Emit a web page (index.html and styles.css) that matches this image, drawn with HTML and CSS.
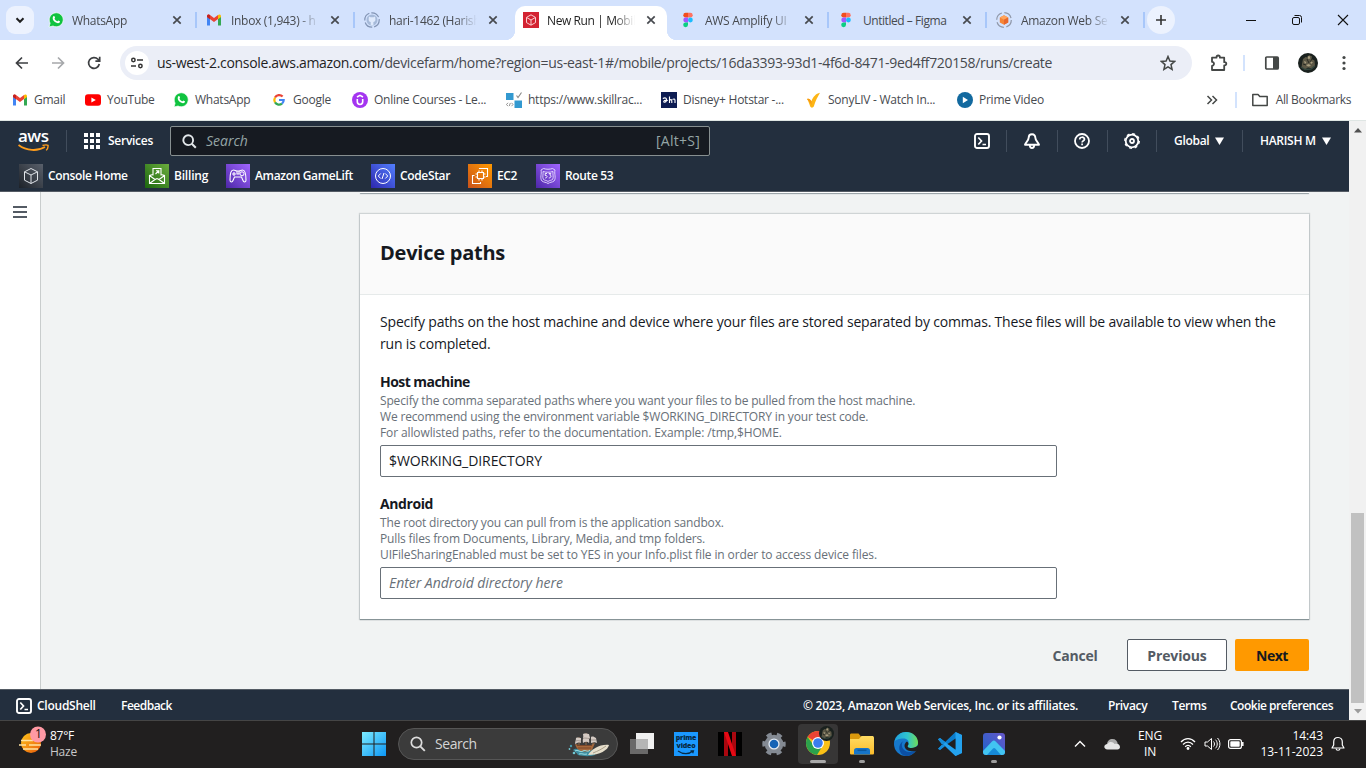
FILE: index.html
```html
<!DOCTYPE html>
<html lang="en">
<head>
<meta charset="utf-8">
<title>New Run | Mobile</title>
<link rel="stylesheet" href="styles.css">
</head>
<body>
<svg class="defs" width="0" height="0">
  <defs>
    <linearGradient id="gHome" x1="0" y1="1" x2="1" y2="0"><stop offset="0" stop-color="#1d2229"/><stop offset="1" stop-color="#59606b"/></linearGradient>
    <linearGradient id="gBill" x1="0" y1="1" x2="1" y2="0"><stop offset="0" stop-color="#1b660f"/><stop offset="1" stop-color="#6cae3e"/></linearGradient>
    <linearGradient id="gPurple" x1="0" y1="1" x2="1" y2="0"><stop offset="0" stop-color="#4d27a8"/><stop offset="1" stop-color="#a166ff"/></linearGradient>
    <linearGradient id="gBlue" x1="0" y1="1" x2="1" y2="0"><stop offset="0" stop-color="#2e27ad"/><stop offset="1" stop-color="#527fff"/></linearGradient>
    <linearGradient id="gOrange" x1="0" y1="1" x2="1" y2="0"><stop offset="0" stop-color="#c8511b"/><stop offset="1" stop-color="#ff9900"/></linearGradient>
    <linearGradient id="gWin" x1="0" y1="0" x2="1" y2="1"><stop offset="0" stop-color="#7cecff"/><stop offset="1" stop-color="#0c96f5"/></linearGradient>
    <linearGradient id="gSun" x1="0" y1="0" x2="1" y2="1"><stop offset="0" stop-color="#ffc61a"/><stop offset="1" stop-color="#e8590c"/></linearGradient>
    <linearGradient id="gEdge" x1="0" y1="0" x2="1" y2="0"><stop offset="0" stop-color="#1fa0dc"/><stop offset=".55" stop-color="#2fc3cf"/><stop offset="1" stop-color="#6fdc58"/></linearGradient>
    <linearGradient id="gPhoto" x1="0" y1="1" x2="1" y2="0"><stop offset="0" stop-color="#1d63c9"/><stop offset="1" stop-color="#6656c9"/></linearGradient>
    <linearGradient id="gFolder" x1="0" y1="0" x2="0" y2="1"><stop offset="0" stop-color="#ffdc63"/><stop offset="1" stop-color="#fcbc2b"/></linearGradient>
    <symbol id="x" viewBox="0 0 16 16"><path d="M4.300 4.300l7.400 7.400M11.700 4.300l-7.400 7.400" stroke="currentColor" stroke-width="1.700" fill="none"/></symbol>
    <symbol id="whatsapp" viewBox="0 0 16 16"><path d="M1 15l1.100-3.800A7 7 0 1 1 5 14z" fill="#10c340" stroke="#fff" stroke-width=".7"/><path d="M5.300 4.300c.8-.7 1.200-.2 1.700 1.200.2.6-.6 1-.5 1.300.6 1.200 1.400 2 2.700 2.500.5 0 .8-1 1.200-.9 1.600.6 1.900 1 1.400 1.900-1 1.600-3 1.100-4.900-.2C4.900 8.500 3.900 6.200 5.300 4.300z" fill="#fff"/></symbol>
    <symbol id="gmail" viewBox="0 0 16 16"><path d="M1 4.500v9h3V6.800z" fill="#4285f4"/><path d="M15 4.500v9h-3V6.800z" fill="#34a853"/><path d="M1 4.200C1 2.500 2.800 2 4 3l4 3 4-3v4L8 10 1 5z" fill="#ea4335"/><path d="M12 3c1.200-1 3-.5 3 1.200V5l-3 2.300z" fill="#fbbc04"/><path d="M1 4.200C1 2.500 2.800 2 4 3v4.200L1 5z" fill="#c5221f"/></symbol>
    <symbol id="figma" viewBox="0 0 16 16"><path d="M8 .8H5.700a2.400 2.400 0 0 0 0 4.800H8z" fill="#f24e1e"/><path d="M8 .8h2.300a2.400 2.400 0 0 1 0 4.800H8z" fill="#ff7262"/><path d="M8 5.600H5.700a2.400 2.400 0 0 0 0 4.800H8z" fill="#a259ff"/><circle cx="10.400" cy="8" r="2.400" fill="#1abcfe"/><path d="M8 10.400H5.700A2.400 2.400 0 1 0 8 12.800z" fill="#0acf83"/></symbol>
    <symbol id="shell" viewBox="0 0 16 16"><rect x="1" y="1" width="14" height="14" rx="2" fill="none" stroke="#fff" stroke-width="1.900"/><path d="M4.300 4.500L7.500 8l-3.200 3.500M8.500 11.500H12" fill="none" stroke="#fff" stroke-width="1.700"/></symbol>
    <symbol id="avatar" viewBox="0 0 20 20"><circle cx="10" cy="10" r="10" fill="#1a211e"/><path d="M5 6l2.500-2 2 .5L11 2l3 1.500-.5 2.500 3 1.500.5 5-3 3-4-1-3 2-3.500-2L4 11z" fill="#5c5846"/><path d="M9.500 3.500l2-.5.800 2.500-2 .5zM6 8l2.500 1L7 11zM12 8l3 1.500-2 1.500zM8 12l3-1 2 2-3 .5z" fill="#a99e80"/><path d="M9 6l2 4M14 6l-2 3M5 11l3 1" stroke="#22251f" stroke-width=".9"/><path d="M3 14l4 2.500 6-.5 4-3" stroke="#34473f" stroke-width="1.300" fill="none"/></symbol>
  </defs>
</svg>

<header class="tabstrip">
  <div class="menu-slot"><span class="tab-menu"><svg width="12" height="12"><path d="M2.500 4.300L6 7.800l3.500-3.500" fill="none" stroke="#1f1f1f" stroke-width="2"/></svg></span></div>
  <div class="tab sep"><svg class="fav"><use href="#whatsapp"/></svg><span class="tt">WhatsApp</span><svg class="close"><use href="#x"/></svg></div>
  <div class="tab sep"><svg class="fav"><use href="#gmail"/></svg><span class="tt">Inbox (1,943) - h</span><svg class="close"><use href="#x"/></svg></div>
  <div class="tab"><svg class="fav" viewBox="0 0 16 16"><circle cx="8" cy="8" r="7.200" fill="none" stroke="#8193b3" stroke-width="1.200" stroke-dasharray="9 2"/><circle cx="8" cy="8" r="5.500" fill="#a6bad9"/><path d="M4.900 4.500l1.700.7h2.800l1.700-.7.3 2.500c.3 2-1 2.900-2 3.100V13.300H6.700v-3.200C5.500 9.900 4.400 9 4.700 7z" fill="#dfeafc"/></svg><span class="tt">hari-1462 (Harish</span><svg class="close"><use href="#x"/></svg></div>
  <div class="tab active"><svg class="fav" viewBox="0 0 16 16"><rect width="16" height="16" fill="#d32332"/><path d="M8 2.800l4.500 2.600v5.200L8 13.200l-4.500-2.600V5.400zM3.800 5.600L8 8l4.200-2.400M8 8v5" fill="none" stroke="#ffdfe0" stroke-width=".9"/></svg><span class="tt">New Run | Mobil</span><svg class="close"><use href="#x"/></svg></div>
  <div class="tab sep"><svg class="fav"><use href="#figma"/></svg><span class="tt">AWS Amplify UI</span><svg class="close"><use href="#x"/></svg></div>
  <div class="tab sep"><svg class="fav"><use href="#figma"/></svg><span class="tt full">Untitled – Figma</span><svg class="close"><use href="#x"/></svg></div>
  <div class="tab sep"><svg class="fav" viewBox="0 0 16 16"><circle cx="8" cy="8" r="7.300" fill="none" stroke="#8f97a8" stroke-width="1.200" stroke-dasharray="9 2.500"/><path d="M8 3.200l4.200 2.300v5L8 12.800l-4.200-2.300v-5z" fill="#f58536"/><path d="M8 3.200l4.200 2.300L8 7.800 3.800 5.500z" fill="#ffa45c"/><path d="M8 7.800l4.200-2.300v5L8 12.800z" fill="#e8672c"/></svg><span class="tt">Amazon Web Se</span><svg class="close"><use href="#x"/></svg></div>
  <span class="newtab"><svg width="12" height="12"><path d="M6 1v10M1 6h10" stroke="#333" stroke-width="1.600"/></svg></span>
  <div class="winctl">
    <svg width="12" height="12"><path d="M1 6.500h10" stroke="#111"/></svg>
    <svg width="12" height="12"><rect x="1.500" y="3.500" width="7" height="7" rx="1.500" fill="none" stroke="#111"/><path d="M3.500 1.500h5a2 2 0 0 1 2 2v5" fill="none" stroke="#111"/></svg>
    <svg width="12" height="12"><path d="M1 1l10 10M11 1L1 11" stroke="#111" stroke-width="1.100"/></svg>
  </div>
</header>

<div class="toolbar">
  <div class="nav">
    <svg width="16" height="16"><path d="M14 8H2.500M8 2.500L2.500 8 8 13.500" fill="none" stroke="#3d3f42" stroke-width="1.700"/></svg>
    <svg width="16" height="16"><path d="M2 8h11.500M8 2.500L13.500 8 8 13.500" fill="none" stroke="#a6a8ab" stroke-width="1.700"/></svg>
    <svg width="16" height="16"><path d="M13.300 9A5.400 5.400 0 1 1 12 4.300l1.300 1.400M13.700 1.800v4.300H9.400" fill="none" stroke="#3d3f42" stroke-width="1.700"/></svg>
  </div>
  <div class="omnibox">
    <span class="site"><svg width="14" height="12"><circle cx="3.400" cy="3" r="1.700" fill="none" stroke="#333" stroke-width="1.500"/><path d="M7 3h6M1 9h5" stroke="#333" stroke-width="1.700"/><circle cx="10.400" cy="9" r="1.700" fill="none" stroke="#333" stroke-width="1.500"/></svg></span>
    <span class="url">us-west-2.console.aws.amazon.com<i>/devicefarm/home?region=us-east-1#/mobile/projects/16da3393-93d1-4f6d-8471-9ed4ff720158/runs/create</i></span>
    <svg class="star" width="16" height="16"><path d="M8 1.500l1.900 4.500 4.700.4-3.600 3.200 1.100 4.800L8 11.900l-4.100 2.500L5 9.600 1.400 6.400 6.100 6z" fill="none" stroke="#444746" stroke-width="1.500"/></svg>
  </div>
  <svg class="ext" width="18" height="18"><path d="M2 3.700h4.500v-.5a1.700 1.700 0 0 1 3.400 0v.5h4.300v4.500h.5a1.600 1.600 0 0 1 0 3.200h-.5V16H2v-4.200a2 2 0 0 0 0-4z" fill="none" stroke="#444746" stroke-width="1.800" stroke-linejoin="round"/></svg>
  <span class="bar"></span>
  <svg class="panel" width="16" height="16"><rect x="1.800" y="2" width="12.400" height="12" rx="1" fill="none" stroke="#444746" stroke-width="1.700"/><path d="M9 2h5v12H9z" fill="#444746"/></svg>
  <svg class="avatar" width="20" height="20"><use href="#avatar"/></svg>
  <svg class="dots" width="4" height="16"><g fill="#444746"><circle cx="2" cy="2.500" r="1.600"/><circle cx="2" cy="8" r="1.600"/><circle cx="2" cy="13.500" r="1.600"/></g></svg>
</div>

<nav class="bookmarks">
  <a class="w72"><svg><use href="#gmail"/></svg>Gmail</a>
  <a class="w89"><svg viewBox="0 0 16 16"><rect x="0" y="2.300" width="16" height="11.400" rx="3" fill="#f00"/><path d="M6.400 5.500L10.800 8l-4.400 2.500z" fill="#fff"/></svg>YouTube</a>
  <a class="w98"><svg><use href="#whatsapp"/></svg>WhatsApp</a>
  <a class="w81"><svg viewBox="0 0 16 16"><g fill="none" stroke-width="2.200"><path d="M11.600 4.500A4.700 4.700 0 0 0 4 5.600" stroke="#ea4335"/><path d="M4 5.600a4.700 4.700 0 0 0 0 4.800" stroke="#fbbc05"/><path d="M4 10.400a4.700 4.700 0 0 0 7 1.200" stroke="#34a853"/><path d="M11 11.600A4.600 4.600 0 0 0 12.700 8H8" stroke="#4285f4"/></g></svg>Google</a>
  <a class="w153"><svg viewBox="0 0 16 16"><circle cx="8" cy="8" r="8" fill="#a435f0"/><path d="M5.300 7v2.800c0 3.500 5.400 3.500 5.400 0V7M5 5l3-1.600L11 5" fill="none" stroke="#fff" stroke-width="1.600"/></svg>Online Courses - Le...</a>
  <a class="w156"><svg viewBox="0 0 16 16"><path d="M0 1h7.500v7H0zM8.500 8.500H16V16H8.500z" fill="#3399d0"/><path d="M10.500 3.500l1.500 2L15.500.500" stroke="#888" fill="none" stroke-width="1.100"/><path d="M2 10.800L.500 12.500 2 14.200M5.500 10.800L7 12.500l-1.500 1.700M4.300 11l-1 3" stroke="#777" stroke-width=".8" fill="none"/></svg>https://www.skillrac...</a>
  <a class="w145"><svg viewBox="0 0 16 16"><rect width="16" height="16" fill="#0d1c52"/><path d="M1.800 6.500c3-1.500 4.200 0 3.700 2S2.200 10.700 2.800 9.300s2-1.200 4-.8M8.500 4.500V11M8.500 8.500c1.300-1.500 2.300-1 2.300.5v2M11.500 7.500c1.500-1 2.500-.5 2.500 1V11" fill="none" stroke="#fff" stroke-width="1.100"/></svg>Disney+ Hotstar -...</a>
  <a class="w151"><svg viewBox="0 0 16 16"><path d="M1 7c2-.8 3.200 0 4.300 2.300C7 5 10 1.500 14 .8 11.500 5 9.500 9 7.800 14.500c-.8 1.500-2.800 1.600-3.600 0C3.200 11.500 2.500 9 1 7z" fill="#fdb515"/><path d="M1 7c2-.8 3.200 0 4.300 2.300L5.800 13z" fill="#f79a13"/></svg>SonyLIV - Watch In...</a>
  <a class="grow"><svg viewBox="0 0 16 16"><circle cx="8" cy="8" r="8" fill="#12699f"/><path d="M5.800 4.800L11 8l-5.200 3.200z" fill="#fff"/></svg>Prime Video</a>
  <svg class="more" width="12" height="12"><path d="M1.500 2L5.500 6l-4 4M6.500 2l4 4-4 4" fill="none" stroke="#444746" stroke-width="1.500"/></svg>
  <span class="bar"></span>
  <a class="all"><svg viewBox="0 0 16 16"><path d="M.8 13.500v-11H6l1.800 2h7.400v9z" fill="none" stroke="#444746" stroke-width="1.500" stroke-linejoin="round"/></svg>All Bookmarks</a>
</nav>

<div class="viewport">
<div class="page">
  <div class="aws">
    <div class="aws-row">
      <div class="logo"><span>aws</span><svg width="32" height="9"><path d="M.5 1c8 6 19 6.500 26.500 2" fill="none" stroke="#ff9d1c" stroke-width="1.800"/><path d="M24.500 1.500c2.500-.8 4.500-.8 5.500-.2.300 1.700-.3 3.400-1.800 5.100" fill="none" stroke="#ff9d1c" stroke-width="1.400"/></svg></div>
      <span class="vr"></span>
      <svg class="grid" width="16" height="16" fill="#fff"><path d="M0 0h4v4H0zM6 0h4v4H6zM12 0h4v4h-4zM0 6h4v4H0zM6 6h4v4H6zM12 6h4v4h-4zM0 12h4v4H0zM6 12h4v4H6zM12 12h4v4h-4z"/></svg>
      <b class="services">Services</b>
      <div class="search"><svg width="15" height="15"><circle cx="6.200" cy="6.200" r="4.900" fill="none" stroke="#e3e7ea" stroke-width="1.900"/><path d="M9.800 9.800l4 4" stroke="#e3e7ea" stroke-width="2"/></svg><i>Search</i><span>[Alt+S]</span></div>
      <div class="tools">
        <span class="cell c1"><svg width="16" height="16"><use href="#shell"/></svg></span>
        <span class="cell c2"><svg width="16" height="16"><path d="M8 1.300c-2.400 0-3.300 1.700-3.300 3.300C4.700 8 1.500 9.500 1 11.700h14c-.5-2.200-3.700-3.700-3.700-7.100C11.300 3 10.400 1.300 8 1.300z" fill="none" stroke="#fff" stroke-width="1.900" stroke-linejoin="round"/><path d="M5.800 12c0 4 4.400 4 4.400 0" fill="none" stroke="#fff" stroke-width="1.800"/></svg></span>
        <span class="cell c3"><svg width="16" height="16"><circle cx="8" cy="8" r="7" fill="none" stroke="#fff" stroke-width="1.800"/><path d="M5.700 6.500c0-3 4.800-3 4.800-.2 0 1.500-2.400 1.400-2.400 3.200M8.100 10.600v1.700" fill="none" stroke="#fff" stroke-width="1.700"/></svg></span>
        <span class="cell c4"><svg width="16" height="16"><circle cx="8" cy="8" r="6.300" fill="none" stroke="#fff" stroke-width="1.800"/><circle cx="8" cy="8" r="7.300" fill="none" stroke="#fff" stroke-width="1.300" stroke-dasharray="2.900 2.830"/><circle cx="8" cy="8" r="2" fill="none" stroke="#fff" stroke-width="1.800"/></svg></span>
        <span class="cell c5">Global<svg width="9" height="8"><path d="M0 .5h9L4.500 8z" fill="#fff"/></svg></span>
        <span class="cell c6">HARISH M<svg width="9" height="8"><path d="M0 .5h9L4.500 8z" fill="#fff"/></svg></span>
      </div>
    </div>
    <div class="favs">
      <b class="f126"><svg viewBox="0 0 24 24"><rect width="24" height="24" fill="url(#gHome)"/><path d="M12 4.500l6.500 3.300v8.400L12 19.500l-6.500-3.300V7.800zM5.500 7.800L12 11l6.500-3.200M12 11v8.500" fill="none" stroke="#dfe3e8"/></svg>Console Home</b>
      <b class="f81"><svg viewBox="0 0 24 24"><rect width="24" height="24" fill="url(#gBill)"/><path d="M8 11.500v-7h8v7M8 10.500l-3.500 1v8h15v-8l-3.500-1M4.500 11.500l5.500 4 2-1 2 1 5.500-4M10.500 10l3-3M11 6.800h2.800v2.800M4.500 19.500l5.500-4M19.500 19.500l-5.500-4" fill="none" stroke="#fff" stroke-width="1.100"/></svg>Billing</b>
      <b class="f145"><svg viewBox="0 0 24 24"><rect width="24" height="24" fill="url(#gPurple)"/><path d="M7.500 6C5 6 4 9 4 16c0 2.500 2.300 2.500 3 .5l1.500-3.500h7l1.500 3.500c.7 2 3 2 3-.5 0-7-1-10-3.500-10-1.500 0-2 1-3.500 1h-2C9.500 7 9 6 7.500 6zM8 8v4M6 10h4M11 7v3h2V7" fill="none" stroke="#fff" stroke-width="1.100"/><circle cx="16" cy="9.800" r="2" fill="none" stroke="#fff"/></svg>Amazon GameLift</b>
      <b class="f97"><svg viewBox="0 0 24 24"><rect width="24" height="24" fill="url(#gBlue)"/><circle cx="12" cy="12" r="7.500" fill="none" stroke="#fff"/><path d="M9.700 9.500L7.300 12l2.400 2.500M14.300 9.500l2.400 2.500-2.400 2.500M13 9l-2 6" fill="none" stroke="#fff"/></svg>CodeStar</b>
      <b class="f68"><svg viewBox="0 0 24 24"><rect width="24" height="24" fill="url(#gOrange)"/><path d="M9.500 8.500h6v6h-6zM11 8.500v-2M14 8.500v-2M11 16.500v-2M14 16.500v-2M9.500 10H7.500M9.500 13H7.500M17.500 10h-2M17.500 13h-2M11.500 5V4.500h8v8h-1.500M6.500 11.500h-2v8h8V18" fill="none" stroke="#fff" stroke-width="1.100"/></svg>EC2</b>
      <b><svg viewBox="0 0 24 24"><rect width="24" height="24" fill="url(#gPurple)"/><path d="M5 6l2.500-1.500c3 1 6 1 9 0L19 6c-1 4 1.500 8-1 11-2 1.500-4 1-6 2.500-2-1.500-4-1-6-2.500-2.500-3 0-7-1-11zM7 7.500c3.500 1 6.500 1 10 0-.5 3 1 6-.5 8-1.500 1-3 .8-4.500 2-1.500-1.200-3-1-4.500-2-1.500-2 0-5-.5-8z" fill="none" stroke="#e9ddff" stroke-width=".9"/><path d="M11 9.500H9.200v2c2.500-.5 2.500 2.500 0 2.500M12.700 9.500h2.100l-1 1.500c2 .3 1.500 3-1 3" fill="none" stroke="#fff" stroke-width=".9"/></svg>Route 53</b>
    </div>
  </div>

  <div class="main">
    <aside class="rail"><svg width="14" height="12"><path d="M0 1h14M0 6h14M0 11h14" stroke="#545b64" stroke-width="2"/></svg></aside>
    <div class="content">
      <div class="prev-card"></div>
      <section class="card">
        <h2>Device paths</h2>
        <div class="card-body">
          <p class="intro">Specify paths on the host machine and device where your files are stored separated by commas. These files will be available to view when the<br>run is completed.</p>
          <label>Host machine</label>
          <p class="hint">Specify the comma separated paths where you want your files to be pulled from the host machine.<br>We recommend using the environment variable $WORKING_DIRECTORY in your test code.<br><span class="wide">For allowlisted paths, refer to the documentation. Example: /tmp,$HOME.</span></p>
          <div class="input">$WORKING_DIRECTORY</div>
          <label class="android">Android</label>
          <p class="hint">The root directory you can pull from is the application sandbox.<br>Pulls files from Documents, Library, Media, and tmp folders.<br><span class="wide">UIFileSharingEnabled must be set to YES in your Info.plist file in order to access device files.</span></p>
          <div class="input ph">Enter Android directory here</div>
        </div>
      </section>
      <div class="actions"><span class="cancel">Cancel</span><span class="previous">Previous</span><span class="next">Next</span></div>
    </div>
  </div>

  <footer class="foot">
    <svg width="16" height="16"><use href="#shell"/></svg><span class="cs">CloudShell</span><span class="fb">Feedback</span>
    <span class="copy">© 2023, Amazon Web Services, Inc. or its affiliates.</span><span class="pr">Privacy</span><span class="te">Terms</span><span class="ck">Cookie preferences</span>
  </footer>
</div>
<div class="scroll"><svg width="8" height="5"><path d="M0 4.500L4 0l4 4.500z" fill="#505050"/></svg><span class="thumb"></span><svg width="8" height="5"><path d="M0 0h8L4 4.500z" fill="#9b9b9b"/></svg></div>
</div>

<div class="taskbar">
  <div class="weather"><svg width="27" height="30"><circle cx="12" cy="17" r="10" fill="url(#gSun)"/><path d="M2 14.500h12M17 14.500h4M0 19h7M10 19h12M4 23h15" stroke="#ffe2a0" stroke-width="1.500"/><circle cx="19" cy="8.500" r="8" fill="#ff99a4"/></svg><em>1</em><div><span>87°F</span><span class="haze">Haze</span></div></div>
  <svg class="start" width="24" height="24"><path d="M0 0h11.500v11.500H0zM12.500 0H24v11.500H12.500zM0 12.500h11.500V24H0zM12.500 12.500H24V24H12.500z" fill="url(#gWin)"/></svg>
  <div class="tsearch"><svg width="16" height="16"><circle cx="6.500" cy="6.500" r="5.200" fill="none" stroke="#ddd" stroke-width="1.700"/><path d="M10.300 10.300l4.500 4.500" stroke="#ddd" stroke-width="1.900"/></svg><span>Search</span>
    <svg class="ship" width="42" height="26"><path d="M5 19c3-3 5 0 8-1 6 2 12 0 16 0l-2 6c-6 2-13 1-17 0-1-2-3-3-5-5z" fill="#3f8ea1"/><path d="M7 13l4 1h12l4-2-3 7c-4 2-9 2-13 0-2-1-3-3-4-6z" fill="#a5683c"/><path d="M9 14.500h15M10 17h13" stroke="#7a4628"/><path d="M18 2v12M11 6v8M25 6v8" stroke="#8f6b4b"/><path d="M15 3c3-1 5 0 6 0l1 4c-2 1 0 3-1 5-2-2-4-1-6 0-1-3 1-6 0-9zM8 7c2-1 3 0 5 0v5c-2-1-4 0-6 1 0-2 1-4 1-6zM23 6c2-1 3 0 5 1l1 5c-2-1-3-1-6 0z" fill="#d4cac3"/><path d="M15 7.500c2-1 4 0 6 0M8 10c2-1 3 0 5 0M23 9h5" stroke="#a39890" fill="none"/><path d="M20 24c4-6 12-11 21-10-1 5-9 10-21 10z" fill="#e6decb"/><path d="M25 22c5-2 9-4 13-7" stroke="#a99f89" fill="none"/><circle cx="3" cy="15" r="1.200" fill="#489bad"/><circle cx="1.500" cy="18" r=".9" fill="#70c5d0"/><circle cx="6" cy="22" r="1.300" fill="#70c5d0"/><path d="M7 20c3-2 5 2 8 0s4 2 7-1M11 23c3-1 5 1 8 0" stroke="#9ee0e5" fill="none"/></svg></div>
  <div class="apps">
    <span><svg width="24" height="24"><path d="M6 1h18v16H6z" fill="#f0f0f0"/><path d="M0 7h18v15H0z" fill="#777" opacity=".85"/><path d="M6 7h12v10H6z" fill="#b5b5b5"/></svg></span>
    <span class="pv"><b>prime</b><b>video</b><svg width="18" height="5"><path d="M1 1c5 3.500 11 3.500 15 0M13.500 .8h3l-.8 2.500" fill="none" stroke="#072a45" stroke-width="1.200"/></svg></span>
    <span><svg width="24" height="24"><rect width="24" height="24" fill="#000"/><path d="M6 0h4v24H6zM14 0h4v24h-4z" fill="#a9070f"/><path d="M6 0h4l8 24h-4z" fill="#e50914"/></svg></span>
    <span><svg width="24" height="24"><circle cx="12" cy="12" r="9.300" fill="#848a93"/><circle cx="12" cy="12" r="9.900" fill="none" stroke="#848a93" stroke-width="3.600" stroke-dasharray="5.180 5.180" stroke-dashoffset="2.590"/><circle cx="12" cy="12" r="5.600" fill="#e4eaf2"/><circle cx="12" cy="12" r="4.300" fill="#1663b5"/></svg></span>
    <span class="run on"><svg width="30" height="30"><circle cx="14" cy="17" r="12" fill="#fbc116"/><path d="M14 17L3.600 11A12 12 0 0 1 24.400 11z" fill="#ea4335"/><path d="M14 17h-6L3.600 11A12 12 0 0 0 13 29l5.500-9z" fill="#2ba24c"/><path d="M24.400 11H14v6z" fill="#ea4335"/><circle cx="14" cy="17" r="6" fill="#fff"/><circle cx="14" cy="17" r="4.800" fill="#3b7ded"/><svg x="15" y="0" width="15" height="15"><use href="#avatar"/></svg></svg></span>
    <span class="run"><svg width="24" height="24"><path d="M0 3c0-1 .5-1.500 1.500-1.500h7l2.500 3v5H0z" fill="#d9980d"/><path d="M0 7h9l2.500-3H22c1.300 0 2 .5 2 2v15c0 1-.5 1.500-1.500 1.500h-21C.5 22.500 0 22 0 21z" fill="url(#gFolder)"/><path d="M4 22.500v-4c0-1.500 1-2.500 2.500-2.500h11c1.500 0 2.500 1 2.500 2.500v4z" fill="#1675c9"/><path d="M7.500 18.300h9" stroke="#0b589e" stroke-width="1.500"/></svg></span>
    <span><svg width="24" height="24"><circle cx="12" cy="12" r="12" fill="#1678cc"/><path d="M.3 10C2 3 7 0 12 0c7 0 12 5 12 10.500 0 4-3.500 5.500-6.500 5.500-4 0-4.500-1.500-3.300-3C16 9 13 6.500 9.500 6.500 5 6.500 1.500 8 .3 10z" fill="url(#gEdge)"/><path d="M9.500 9C6 12 8 20 16 20c3 0 5-1 6.500-3C20 22 16 24 12 24 4 23 3 12 9.500 9z" fill="#0b4fa4"/><path d="M14.200 13c-1.200 1.500-.7 3 3.300 3 2.300 0 4.700-.7 6.500-2.700v4L22 19c-4 1-11 0-11.500-5 0-2 1-3.500 2.500-4.500 1.200 1 2 2.200 1.200 3.500z" fill="#211f1f"/></svg></span>
    <span><svg width="24" height="24"><path d="M17.500 0L24 3v18l-6.500 3L7 14l-5 4-2-1.200L17.500 0z" fill="#0b7ccb"/><path d="M17.500 24L0 7.200 2 6l15.500 12V0L24 3v18z" fill="#24a2ee"/><path d="M17.500 6.500L9.500 12l8 5.500z" fill="#211f1f"/><path d="M0 7.200L2 6l5.500 4.200-3 3zM0 16.800L2 18l5-4-2.500-2z" fill="#168cd8"/></svg></span>
    <span class="run"><svg width="24" height="24"><rect x="1" y="1" width="22" height="22" rx="3" fill="url(#gPhoto)"/><path d="M1 19L10 9.500c1.200-1.200 2.500-1.200 3.700 0L23 19v1c0 2-1 3-3 3H4c-2 0-3-1-3-3z" fill="#42c4f1"/><path d="M5 23l6-6.500c.7-.7 1.500-.7 2.200 0L19 23z" fill="#168ad8"/><circle cx="17.500" cy="5.500" r="2.100" fill="#fff"/></svg></span>
  </div>
  <div class="tray">
    <svg class="chev" width="12" height="8"><path d="M1 6.500l5-5 5 5" fill="none" stroke="#fff" stroke-width="1.400"/></svg>
    <svg class="cloud" width="16" height="12"><path d="M3 6.500C3 3 5.500 1 8.500 1s5 2 5.300 5z" fill="#aaa"/><path d="M3.500 11.500C-1 11.500-.5 6 3.500 6c1.500-3 6-2.500 7 0 3-.8 5.500.5 5.500 3 0 1.500-1 2.500-2.500 2.500z" fill="#e5e5e5"/></svg>
    <div class="lang"><span>ENG</span><span>IN</span></div>
    <svg class="wifi" width="16" height="14"><path d="M1 5c4-4.500 10-4.500 14 0M3 7.500c3-3.300 7-3.300 10 0M5.200 9.700c1.700-1.800 3.900-1.800 5.600 0" fill="none" stroke="#fff" stroke-width="1.300"/><circle cx="8" cy="11.500" r="1.400" fill="#fff"/></svg>
    <svg class="vol" width="17" height="14"><path d="M1 5h2.500L7.500 1.500v11L3.500 9H1z" fill="none" stroke="#fff"/><path d="M9.500 4.500c1.300 1.300 1.300 3.700 0 5M11.500 2.700c2.300 2.300 2.300 6.300 0 8.600M13.500 1c3.200 3.300 3.200 8.700 0 12" fill="none" stroke="#fff"/></svg>
    <svg class="bat" width="16" height="12"><rect x=".6" y="1.600" width="12.800" height="8.800" rx="2" fill="none" stroke="#fff" stroke-width="1.200"/><rect x="2.300" y="3.300" width="9.400" height="5.400" rx=".8" fill="#fff"/><path d="M14.800 4v4" stroke="#fff" stroke-width="1.500"/></svg>
    <div class="clock"><span>14:43</span><span>13-11-2023</span></div>
    <svg class="bell" width="14" height="16"><path d="M7 1.500c-3 0-4.300 2-4.300 4.500v3L1 12h12l-1.700-3V6C11.300 3.500 10 1.500 7 1.500z" fill="none" stroke="#fff" stroke-width="1.200" stroke-linejoin="round"/><path d="M5 12.500c.3 2.300 3.700 2.300 4 0" fill="none" stroke="#fff" stroke-width="1.200"/></svg>
  </div>
</div>
</body>
</html>
```
FILE: styles.css
```css
* { box-sizing: border-box; }
body { margin: 0; width: 1366px; height: 768px; overflow: hidden; display: flex; flex-direction: column; background: #fff; font: 12px/16px "Open Sans", "Noto Sans", sans-serif; white-space: nowrap; }
svg { display: block; flex: none; }
.defs { position: absolute; }

/* Browser tab strip */
.tabstrip { height: 46px; flex: none; display: flex; background: linear-gradient(#d3e2fd 0 40px, #fff 40px); color: #474a4f; }
.menu-slot { width: 38px; padding: 6px 0 0 6px; }
.tab-menu { width: 28px; height: 28px; border-radius: 9px; background: #ecf2fe; display: flex; align-items: center; justify-content: center; }
.tab { position: relative; width: 158px; height: 40px; padding: 0 0 0 10px; display: flex; align-items: center; }
.tab.sep::after { content: ""; position: absolute; right: -1px; top: 12px; width: 2px; height: 16px; background: #a8c7fa; }
.fav { width: 16px; height: 16px; margin-right: 8px; }
.tt { width: 96px; padding: 2px 0 0; letter-spacing: -.3px; -webkit-mask-image: linear-gradient(90deg, #000 68px, transparent 89px); }
.tab + .tab .tt { padding-left: 1px; }
.tt.full { -webkit-mask-image: none; letter-spacing: -.45px; }
.close { width: 16px; height: 16px; margin-left: 1px; color: #474a4f; }
.tab.active { margin: 6px 3px 0 3px; width: 152px; height: 34px; padding: 0 0 6px 8px; background: #fff; border-radius: 10px 10px 0 0; color: #1f1f1f; }
.tab.active .fav { margin-right: 7px; }
.tab.active .tt { letter-spacing: -.4px; }
.tab.active::before, .tab.active::after { content: ""; position: absolute; bottom: 0; width: 10px; height: 10px; }
.tab.active::before { left: -10px; background: radial-gradient(circle at 0 0, transparent 10px, #fff 10.500px); }
.tab.active::after { right: -10px; background: radial-gradient(circle at 100% 0, transparent 10px, #fff 10.500px); }
.newtab { margin: 6px 0 0 3px; width: 28px; height: 28px; border-radius: 50%; background: #ecf2fe; display: flex; align-items: center; justify-content: center; }
.winctl { margin-left: auto; height: 40px; padding-right: 17px; display: flex; gap: 34px; align-items: center; }

/* Address bar */
.toolbar { height: 34px; flex: none; display: flex; align-items: center; padding: 0 20px 0 14px; }
.nav { display: flex; gap: 20px; }
.omnibox { width: 1072px; height: 34px; margin-left: 18px; border-radius: 17px; background: #ebeef7; display: flex; align-items: center; padding: 0 16px 0 5px; }
.site { width: 24px; height: 24px; border-radius: 50%; background: #fff; display: flex; align-items: center; justify-content: center; margin-right: 8px; }
.url { font-size: 14px; letter-spacing: -.327px; color: #1f1f1f; flex: 1; }
.url i { font-style: normal; color: #474a4f; }
.ext { margin-left: 18px; }
.bar { width: 2px; height: 16px; background: #d3e3fd; }
.toolbar .bar { margin-left: 15px; }
.panel { margin-left: 19px; }
.avatar { margin-left: 18px; }
.dots { margin-left: 24px; }

/* Bookmarks */
.bookmarks { height: 41px; flex: none; display: flex; align-items: center; padding: 0 15px 0 12px; border-bottom: 1px solid #dfe6e4; color: #474a4f; letter-spacing: -.25px; }
.bookmarks a { display: flex; align-items: center; gap: 6px; }
.bookmarks a svg { width: 16px; height: 16px; }
.w72 { width: 73px; } .w89 { width: 88px; } .w98 { width: 98px; } .w81 { width: 81px; }
.w153 { width: 153px; } .w156 { width: 156px; } .w145 { width: 145px; } .w151 { width: 151px; }
.w156, .w145 { padding-left: 1px; }
.bookmarks .w145 svg { margin-left: -1px; }
.grow { flex: 1; }
.bookmarks .bar { margin: 0 15px 0 17px; }
.bookmarks .all { gap: 8px; letter-spacing: -.36px; }

/* Console viewport */
.viewport { flex: 1; min-height: 0; display: flex; }
.page { width: 1349px; display: flex; flex-direction: column; }
.aws { height: 71px; flex: none; background: #232f3e; border-bottom: 1px solid #545b64; color: #fff; font-weight: 600; }
.aws-row { height: 40px; display: flex; align-items: center; padding-left: 18px; }
.logo { width: 32px; height: 22px; }
.logo span { display: block; height: 14px; width: 30px; font: 600 17px/12px "Open Sans", sans-serif; letter-spacing: -.5px; text-align: center; }
.vr { width: 1px; height: 22px; background: #414d5c; margin: 0 17px 0 16px; }
.services { width: 62px; margin-left: 8px; font-weight: 600; letter-spacing: -.27px; }
.search { width: 540px; height: 30px; border: 1px solid #878f90; border-radius: 2px; background: #161a21; display: flex; align-items: center; padding: 0 9px 0 11px; font-size: 14px; font-weight: 400; color: #95a5a6; }
.search svg { margin-right: 9px; }
.search i { flex: 1; letter-spacing: 0; }
.search span { letter-spacing: .25px; }
.tools { flex: 1; display: flex; height: 22px; }
.cell { display: flex; align-items: center; padding-left: 17px; border-left: 1px solid #414d5c; letter-spacing: -.3px; }
.c1 { width: 296px; padding-left: 264px; border: 0; }
.c2 { width: 51px; } .c3 { width: 50px; padding-left: 16px; } .c4 { width: 49px; padding-left: 16px; } .c5 { width: 86px; } .c6 { padding-left: 17px; }
.cell svg[width="9"] { margin-left: 6px; }
.favs { height: 30px; display: flex; padding: 3px 0 0 19px; letter-spacing: -.35px; }
.favs b { height: 24px; display: flex; align-items: center; gap: 5px; font-weight: 600; }
.favs svg { width: 24px; height: 24px; }
.f126 { width: 126px; } .f81 { width: 81px; letter-spacing: -.2px; } .f145 { width: 145px; } .f97 { width: 97px; } .f68 { width: 68px; }

.main { flex: 1; min-height: 0; display: flex; background: #f1f3f3; }
.rail { width: 41px; background: #fff; border-right: 1px solid #c9cdcd; padding: 14px 0 0 13px; }
.content { margin-left: 319px; width: 949px; }
.prev-card { height: 1px; background: #fff; box-shadow: 0 1px 1px #879196; }
.card { margin-top: 21px; height: 405px; background: #fff; box-shadow: 0 1px 1px rgba(0, 28, 36, .35), 0 0 1px 1px rgba(0, 28, 36, .14); color: #16191f; }
.card h2 { margin: 0; height: 81px; padding: 25px 20px 0; font-size: 20px; line-height: 28px; font-weight: 700; letter-spacing: -.24px; background: #fafafa; border-bottom: 1px solid #e6eaea; }
.card-body { padding: 16px 20px; }
.intro { margin: 0 0 16px; font-size: 14px; line-height: 22px; letter-spacing: -.18px; }
label { display: block; height: 22px; font-size: 14px; line-height: 22px; font-weight: 700; letter-spacing: -.55px; }
.android { letter-spacing: -.4px; }
.hint { margin: 0 0 4px; color: #687078; letter-spacing: -.16px; }
.wide { letter-spacing: -.115px; }
.input { width: 677px; height: 32px; margin-bottom: 16px; border: 1px solid #687078; border-radius: 2px; padding: 0 8px; font-size: 14px; line-height: 30px; letter-spacing: -.07px; }
.ph { font-style: italic; color: #687078; letter-spacing: -.03px; }
.actions { margin-top: 20px; display: flex; justify-content: flex-end; font-size: 14px; line-height: 31px; font-weight: 700; color: #545b64; letter-spacing: -.15px; text-align: center; }
.actions span { height: 32px; border: 1px solid transparent; border-radius: 2px; }
.cancel { width: 88px; margin-right: 8px; letter-spacing: -.2px; }
.previous { width: 100px; margin-right: 8px; }
.actions .previous { border-color: #545b64; background: #fff; }
.next { width: 74px; letter-spacing: -.5px; }
.actions .next { background: #ff9900; color: #16191f; }

.foot { height: 31px; flex: none; display: flex; align-items: center; padding: 1px 16px 0; background: #232f3e; border-top: 1px solid #545b64; color: #fff; font-weight: 600; letter-spacing: -.35px; }
.cs { width: 84px; margin-left: 5px; letter-spacing: -.25px; }
.fb { letter-spacing: -.5px; }
.copy { margin-left: auto; width: 275px; letter-spacing: -.273px; }
.pr { width: 40px; margin-left: 30px; }
.te { width: 33px; margin-left: 24px; }
.ck { width: 103px; margin-left: 25px; letter-spacing: -.487px; }

.scroll { width: 17px; background: #f1f1f1; display: flex; flex-direction: column; align-items: center; padding: 7px 0 6px; }
.thumb { width: 13px; height: 190px; margin: auto 0 6px; background: #c1c1c1; }

/* Desktop taskbar */
.taskbar { height: 48px; flex: none; display: flex; align-items: center; padding-bottom: 2px; background: #211f1f; border-top: 1px solid #454545; color: #fff; font-size: 12px; }
.weather { position: relative; width: 362px; height: 45px; padding-left: 19px; display: flex; line-height: 16px; letter-spacing: -.25px; }
.weather svg { margin-top: 5px; }
.weather em { position: absolute; left: 35px; top: 5px; font-style: normal; color: #111; }
.weather div { margin: 7px 0 0 4px; display: flex; flex-direction: column; }
.haze { color: #c9c9c9; }
.tsearch { width: 220px; height: 32px; margin-left: 12px; border: 1px solid #565656; border-radius: 16px; background: #3b3b3b; display: flex; align-items: center; padding: 0 7px 0 11px; font-size: 14px; color: #d5d5d5; letter-spacing: -.45px; }
.tsearch span { flex: 1; margin-left: 9px; }
.apps { display: flex; margin-left: 2px; }
.apps > span { position: relative; width: 40px; height: 40px; margin: 0 2px; display: flex; align-items: center; justify-content: center; border-radius: 4px; }
.apps .on { background: #373636; }
.apps .on svg { margin: -6px 0 0 2px; }
.run::after { content: ""; position: absolute; bottom: 1px; left: 17px; width: 6px; height: 3px; border-radius: 2px; background: #9d9d9d; }
.on::after { left: 12px; width: 16px; background: #aaa; }
.apps > .pv { width: 24px; height: 24px; margin: 8px 10px; padding-top: 1px; flex-direction: column; background: #1a98ff; border-radius: 0; color: #072a45; font: 700 7px/8px "Open Sans", sans-serif; letter-spacing: -.2px; }
.tray { margin-left: auto; display: flex; align-items: center; padding-right: 21px; }
.tray div { display: flex; flex-direction: column; line-height: 16px; }
.cloud { margin-left: 18px; }
.lang { width: 24px; margin-left: 18px; align-items: center; letter-spacing: -.2px; }
.wifi { margin-left: 18px; }
.vol { margin-left: 8px; }
.bat { margin-left: 7px; }
.clock { width: 64px; margin-left: 15px; align-items: flex-end; }
.bell { margin-left: 8px; }
```
